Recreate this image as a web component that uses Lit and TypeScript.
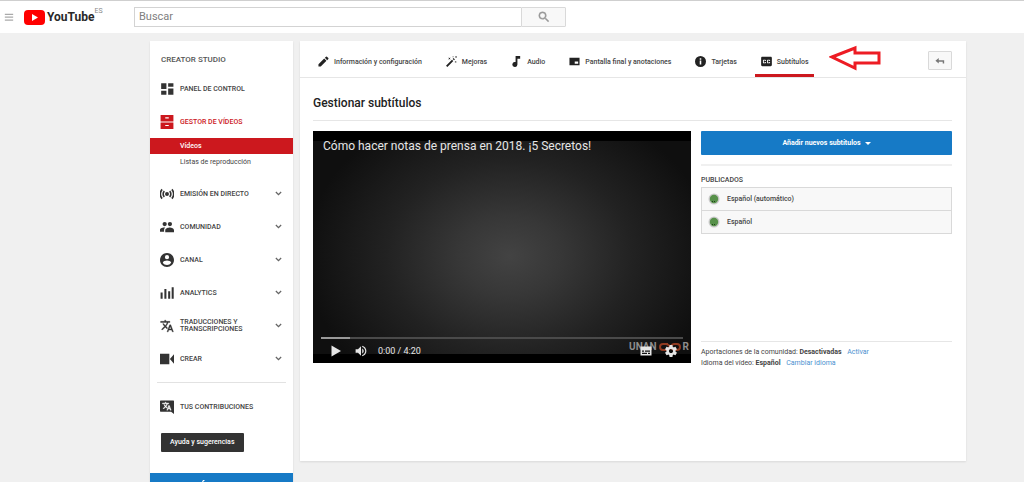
import { LitElement, html, css, svg, nothing } from "lit";
import { customElement, property } from "lit/decorators.js";

const icons: Record<string, unknown> = {
  menu: svg`<path d="M2 4h20v3H2zM2 11h20v3H2zM2 18h20v3H2z"/>`,
  search: svg`<path stroke="currentColor" stroke-width=".7" d="M15.5 14h-.79l-.28-.27A6.47 6.47 0 0 0 16 9.5 6.5 6.5 0 1 0 9.5 16c1.61 0 3.09-.59 4.23-1.57l.27.28v.79l5 4.99L20.49 19l-4.99-5zm-6 0C7.01 14 5 11.99 5 9.5S7.01 5 9.5 5 14 7.01 14 9.5 11.99 14 9.5 14z"/>`,
  dashboard: svg`<path d="M2 12h9V2H2v10zm0 10h9v-7H2v7zm12 0h9V11h-9v11zm0-20v6h9V2h-9z"/>`,
  drawers: svg`<path fill-rule="evenodd" d="M1 0h22v11H1zM9 4v2h6V4zM1 13h22v11H1zM9 17v2h6v-2z"/>`,
  live: svg`<circle cx="12" cy="12" r="3.4"/><path fill="none" stroke="currentColor" stroke-width="2.8" d="M7.5 7a7 7 0 0 0 0 10M16.5 7a7 7 0 0 1 0 10M3.600 4a12 12 0 0 0 0 16M20.400 4a12 12 0 0 1 0 16"/>`,
  people: svg`<circle cx="8" cy="7" r="3.700"/><circle cx="17" cy="7" r="3.700"/><path d="M17 13c-3 0-8 1.500-8 4.500V21h15v-3.500c0-3-4-4.500-7-4.500zM9 13c-4 0-9 1-9 4v3h7v-2.500c0-2 1-3.500 2-4.500z"/>`,
  account: svg`<path d="M12 0C5.400 0 0 5.400 0 12s5.400 12 12 12 12-5.400 12-12S18.600 0 12 0zm0 3.600a3.600 3.600 0 1 1 0 7.200 3.600 3.600 0 0 1 0-7.200zm0 17c-3 0-5.650-1.500-7.200-3.860.04-2.390 4.800-3.700 7.200-3.700s7.160 1.310 7.200 3.700A8.600 8.600 0 0 1 12 20.600z"/>`,
  bars: svg`<path d="M1 11h3.500v11H1zM7.500 5H11v17H7.500zM14 9h3.500v13H14zM20 2h3.500v20H20z"/>`,
  translate: svg`<path stroke="currentColor" stroke-width=".6" d="M12.870 15.070l-2.540-2.510.03-.03c1.740-1.940 2.980-4.170 3.710-6.530H17V4h-7V2H8v2H1v1.990h11.170C11.500 7.920 10.440 9.750 9 11.350 8.070 10.320 7.300 9.190 6.690 8h-2c.73 1.630 1.730 3.170 2.980 4.560l-5.090 5.020L4 19l5-5 3.110 3.110.76-2.040zM18.500 10h-2L12 22h2l1.120-3h4.750L21 22h2l-4.500-12zm-2.620 7l1.620-4.330L19.120 17h-3.240z"/>`,
  camera: svg`<path d="M0 3h16v18H0zM17 12l7-8v16z"/>`,
  contrib: svg`<path d="M1 1h22a1 1 0 0 1 1 1v22l-5-4H1a1 1 0 0 1-1-1V2a1 1 0 0 1 1-1z"/><g fill="#fff" stroke="#fff" transform="translate(3.500 2.500) scale(.68)"><path d="M12.870 15.070l-2.540-2.510.03-.03c1.740-1.940 2.980-4.170 3.710-6.530H17V4h-7V2H8v2H1v1.990h11.170C11.500 7.920 10.440 9.750 9 11.350 8.070 10.320 7.300 9.190 6.690 8h-2c.73 1.630 1.730 3.170 2.980 4.560l-5.090 5.020L4 19l5-5 3.110 3.110.76-2.040zM18.500 10h-2L12 22h2l1.120-3h4.750L21 22h2l-4.500-12zm-2.620 7l1.620-4.330L19.120 17h-3.240z"/></g>`,
  chevron: svg`<path fill="none" stroke="currentColor" stroke-width="4.500" d="M3 7l9 9 9-9"/>`,
  pencil: svg`<path d="M1 18v5h5L18.500 10.500l-5-5zM22.500 6.500a1.500 1.500 0 0 0 0-2l-3-3a1.500 1.500 0 0 0-2 0l-2.500 2.500 5 5z"/>`,
  wand: svg`<path d="M0 21L13 8l3 3L3 24zM14.500 6.500l2-2 3 3-2 2zM5 3l2.500 1.500L10 3 8.500 5.500 10 8 7.500 6.500 5 8l1.500-2.500zM14 0l1.500 1L17 0l-1 1.500L17 3l-1.500-1L14 3l1-1.500zM20 0l2 1 2-1-1 2 1 2-2-1-2 1 1-2zM19 11l2 1.200L23 11l-1.200 2L23 15l-2-1.200L19 15l1.200-2z"/>`,
  note: svg`<path d="M10 0h10v6h-6v12.500a5.500 5.500 0 1 1-4-5.300z"/>`,
  endscreen: svg`<path fill-rule="evenodd" d="M1 4h22v16H1zM12.500 12v5H20v-5z"/>`,
  info: svg`<path d="M12 0a12 12 0 1 0 0 24 12 12 0 0 0 0-24zm1.700 18.500h-3.400V10h3.400zm0-10.500h-3.400V4.800h3.400z"/>`,
  cc: svg`<path transform="translate(-3.600 -3.600) scale(1.300)" d="M19 4H5c-1.110 0-2 .9-2 2v12c0 1.100.89 2 2 2h14c1.100 0 2-.9 2-2V6c0-1.100-.9-2-2-2zm-8 7H9.500v-.5h-2v3h2V13H11v1c0 .55-.45 1-1 1H7c-.55 0-1-.45-1-1v-4c0-.55.45-1 1-1h3c.55 0 1 .45 1 1v1zm7 0h-1.500v-.5h-2v3h2V13H18v1c0 .55-.45 1-1 1h-3c-.55 0-1-.45-1-1v-4c0-.55.45-1 1-1h3c.55 0 1 .45 1 1v1z"/>`,
  back: svg`<path d="M9 5v5h13v8h-3.500v-4.500H9V18l-8-6.500z"/>`,
  play: svg`<path d="M3 1v22l19-11z"/>`,
  volume: svg`<path transform="translate(-2.400 -2.400) scale(1.200)" d="M3 9v6h4l5 5V4L7 9H3zm13.500 3c0-1.770-1.020-3.290-2.500-4.030v8.050c1.480-.73 2.500-2.250 2.500-4.020zM14 3.230v2.060c2.890.86 5 3.540 5 6.710s-2.110 5.850-5 6.710v2.060c4.010-.91 7-4.490 7-8.770s-2.990-7.860-7-8.770z"/>`,
  subs: svg`<path fill-rule="evenodd" d="M1 3h22v18H1zM4 11v2.500h4V11zm6 0v2.500h10V11zM4 15.500V18h10v-2.500zm12 0V18h4v-2.500z"/>`,
  gear: svg`<path transform="translate(-2.400 -2.400) scale(1.200)" d="M19.430 12.980c.04-.32.07-.64.07-.98s-.03-.66-.07-.98l2.110-1.650c.19-.15.24-.42.12-.64l-2-3.460c-.12-.22-.39-.3-.61-.22l-2.490 1c-.52-.4-1.080-.73-1.690-.98l-.38-2.650C14.460 2.180 14.250 2 14 2h-4c-.25 0-.46.18-.49.42l-.38 2.650c-.61.25-1.170.59-1.690.98l-2.490-1c-.23-.09-.49 0-.61.22l-2 3.460c-.13.22-.07.49.12.64l2.110 1.650c-.04.32-.07.65-.07.98s.03.66.07.98l-2.110 1.650c-.19.15-.24.42-.12.64l2 3.460c.12.22.39.3.61.22l2.490-1c.52.4 1.080.73 1.690.98l.38 2.650c.03.24.24.42.49.42h4c.25 0 .46-.18.49-.42l.38-2.650c.61-.25 1.170-.59 1.690-.98l2.490 1c.23.09.49 0 .61-.22l2-3.460c.12-.22.07-.49-.12-.64l-2.110-1.650zM12 15.500c-1.930 0-3.500-1.570-3.500-3.500s1.570-3.500 3.500-3.500 3.500 1.570 3.500 3.500-1.570 3.500-3.500 3.500z"/>`,
};

@customElement("ui-icon")
class UiIcon extends LitElement {
  @property() name = "";
  static styles = css`
    :host { display: block; flex: none; width: 14px; height: 14px; }
    svg { display: block; width: 100%; height: 100%; fill: currentColor; }
  `;
  render() {
    return html`<svg viewBox="0 0 24 24" aria-hidden="true">${icons[this.name]}</svg>`;
  }
}

const base = css`
  * { box-sizing: border-box; margin: 0; padding: 0; }
  a { color: inherit; text-decoration: none; }
  button { font: inherit; color: inherit; border: 0; background: none; }
  ul { list-style: none; }
`;

@customElement("studio-header")
class StudioHeader extends LitElement {
  static styles = [base, css`
    :host { display: block; }
    header { display: flex; align-items: center; height: 33px; padding-left: 4px; background: #fff; border-top: 1px solid #cfcfcf; }
    .menu { color: #aaa; }
    .menu ui-icon { width: 10px; height: 10px; }
    .logo { display: flex; align-items: center; margin-left: 10px; width: 110px; }
    .logo svg { width: 21px; height: 15px; margin-right: 2px; }
    .word { font-size: 12px; line-height: 18px; font-weight: 700; color: #282828; }
    .region { align-self: flex-start; font-size: 7px; line-height: 7px; color: #888; }
    form { display: flex; flex: 0 1 432px; height: 20px; }
    input { flex: 1; min-width: 0; font: 11px/18px Roboto, sans-serif; padding-left: 4px; border: 1px solid #d3d3d3; border-right: 0; border-radius: 0; background: #fff; }
    input::placeholder { color: #808080; opacity: 1; }
    .go { display: flex; align-items: center; justify-content: center; width: 45px; border: 1px solid #d9d9d9; border-radius: 0 1px 1px 0; background: #f8f8f8; color: #999; }
    .go ui-icon { width: 14px; height: 14px; }
  `];
  render() {
    return html`<header>
      <button class="menu" aria-label="Menú"><ui-icon name="menu"></ui-icon></button>
      <a class="logo" href="#" aria-label="YouTube ES">
        <svg viewBox="0 0 21 15"><rect width="21" height="15" rx="4" fill="#f00"/><path d="M8 4l6 3.500L8 11z" fill="#fff"/></svg>
        <span class="word">YouTube</span><span class="region">ES</span>
      </a>
      <form>
        <input type="text" placeholder="Buscar" aria-label="Buscar" />
        <button class="go" type="button" aria-label="Buscar"><ui-icon name="search"></ui-icon></button>
      </form>
    </header>`;
  }
}

const sections = [
  { icon: "live", label: "Emisión en directo" },
  { icon: "people", label: "Comunidad" },
  { icon: "account", label: "Canal" },
  { icon: "bars", label: "Analytics" },
  { icon: "translate", label: "Traducciones y transcripciones" },
  { icon: "camera", label: "Crear" },
];

@customElement("studio-sidebar")
class StudioSidebar extends LitElement {
  static styles = [base, css`
    :host { display: block; background: #fff; box-shadow: 0 1px 2px rgba(0, 0, 0, 0.1); color: #444; }
    h2 { font-size: 8px; line-height: 12px; font-weight: 500; padding: 13px 11px 6px; text-transform: uppercase; color: #555; }
    .row { display: flex; align-items: center; gap: 6px; height: 33px; padding: 0 11px 0 10px; font-weight: 500; text-transform: uppercase; line-height: 7px; }
    .row > ui-icon { color: #333; }
    .label { flex: 1; padding-top: 1px; }
    .row .more { width: 7px; height: 7px; color: #666; }
    .active, .active > ui-icon { color: #cc181e; }
    .sub { display: block; line-height: 16px; padding-left: 30px; }
    .chosen { background: #cc181e; color: #fff; font-weight: 500; }
    .subs { margin-bottom: 7px; }
    hr { border: 0; border-top: 1px solid #e2e2e2; margin: 7px 7px; }
    .help { display: block; margin: 10px 11px 21px; padding: 0 9px; line-height: 19px; border-radius: 1px; background: #333; color: #fff; font-weight: 500; }
    .classic { display: block; height: 24px; padding: 7px 0 0 51px; background: #167ac6; }
    .classic svg { display: block; width: 4px; height: 2px; fill: #fff; }
  `];
  render() {
    return html`<nav aria-label="Creator Studio">
      <h2>Creator Studio</h2>
      <a class="row" href="#"><ui-icon name="dashboard"></ui-icon><span class="label">Panel de control</span></a>
      <a class="row active" href="#"><ui-icon name="drawers"></ui-icon><span class="label">Gestor de vídeos</span></a>
      <div class="subs">
        <a class="sub chosen" href="#">Vídeos</a>
        <a class="sub" href="#">Listas de reproducción</a>
      </div>
      ${sections.map((s) => html`<a class="row" href="#"><ui-icon name=${s.icon}></ui-icon><span class="label">${s.label}</span><ui-icon class="more" name="chevron"></ui-icon></a>`)}
      <hr />
      <a class="row" href="#"><ui-icon name="contrib"></ui-icon><span class="label">Tus contribuciones</span></a>
      <button class="help">Ayuda y sugerencias</button>
      <a class="classic" href="#" aria-label="Creator Studio"><svg viewBox="0 0 4 2" aria-hidden="true"><path d="M2 0h2L2 2H1z"/></svg></a>
    </nav>`;
  }
}

@customElement("video-player")
class VideoPlayer extends LitElement {
  static styles = [base, css`
    :host { display: block; }
    .player { position: relative; display: flex; flex-direction: column; aspect-ratio: 378 / 232; color: #e6e6e6; border-top: 10px solid #000; border-bottom: 9px solid #000; background: radial-gradient(ellipse 54% 75% at 52% 54%, #434343 0%, #373737 25%, #222 60%, #0f0f0f 100%); }
    h3 { flex: 1; font-size: 12px; line-height: 14px; font-weight: 400; padding: 0 10px; margin-top: -2px; }
    .track { height: 2px; margin: 0 8px; background: #4a4a4a; }
    .loaded { width: 8%; height: 2px; background: #999; }
    .controls { display: flex; align-items: center; height: 24px; margin-bottom: -9px; padding: 0 14px 0 17px; z-index: 1; }
    .controls button + button { margin-left: 13px; }
    .controls ui-icon { width: 12px; height: 12px; }
    .time { flex: 1; margin-left: 11px; font-size: 9px; line-height: 12px; }
    .mark { position: absolute; right: 2px; bottom: 0; display: flex; align-items: center; font-size: 10px; line-height: 14px; font-weight: 700; color: #8d8d8d; }
    .mark svg { width: 26px; height: 10px; }
  `];
  render() {
    return html`<div class="player">
      <h3>Cómo hacer notas de prensa en 2018. ¡5 Secretos!</h3>
      <div class="track"><div class="loaded"></div></div>
      <div class="mark"><span>UNAN</span><svg viewBox="0 0 24 10" fill="none" stroke="#8f3a20" stroke-width="2"><path d="M10 2H5a3 3 0 0 0 0 6h3c3 0 5-6 8-6h3a3 3 0 0 1 0 6h-3c-3 0-4-6-8-6"/></svg><span>R</span></div>
      <div class="controls">
        <button aria-label="Reproducir"><ui-icon name="play"></ui-icon></button>
        <button aria-label="Volumen"><ui-icon name="volume"></ui-icon></button>
        <span class="time">0:00 / 4:20</span>
        <button aria-label="Subtítulos"><ui-icon name="subs"></ui-icon></button>
        <button aria-label="Configuración"><ui-icon name="gear"></ui-icon></button>
      </div>
    </div>`;
  }
}

const tabs = [
  { icon: "pencil", label: "Información y configuración" },
  { icon: "wand", label: "Mejoras" },
  { icon: "note", label: "Audio" },
  { icon: "endscreen", label: "Pantalla final y anotaciones" },
  { icon: "info", label: "Tarjetas" },
  { icon: "cc", label: "Subtítulos", active: true },
];

@customElement("subtitle-editor")
class SubtitleEditor extends LitElement {
  static styles = [base, css`
    :host { display: block; background: #fff; box-shadow: 0 1px 2px rgba(0, 0, 0, 0.1); color: #444; }
    .tabs { position: relative; display: flex; gap: 13px; height: 37px; padding: 0 14px 0 12px; border-bottom: 1px solid #e6e6e6; }
    .tab { display: flex; align-items: center; gap: 5px; height: 36px; padding: 7px 5px 0 6px; font-weight: 500; border-bottom: 3px solid transparent; white-space: nowrap; }
    .tab ui-icon { width: 11px; height: 11px; color: #222; }
    .tab span { padding-top: 2px; }
    .on { border-bottom-color: #cc181e; }
    .back { display: flex; align-items: center; justify-content: center; width: 24px; height: 19px; margin: 10px 0 0 auto; border: 1px solid #d9d9d9; border-radius: 1px; background: #f8f8f8; color: #777; }
    .back ui-icon { width: 10px; height: 10px; }
    .arrow { position: absolute; left: 529px; top: 4px; width: 54px; height: 26px; }
    .body { padding: 0 14px 98px 13px; }
    h1 { font-size: 12px; line-height: 16px; font-weight: 500; color: #222; padding: 17px 0 9px; border-bottom: 1px solid #e6e6e6; margin-bottom: 10px; }
    .columns { display: grid; grid-template-columns: 378fr 251fr; gap: 10px; }
    .side { display: flex; flex-direction: column; }
    .add { display: flex; align-items: center; justify-content: center; gap: 4px; height: 24px; border-radius: 1px; background: #167ac6; color: #fff; font-weight: 700; }
    .add svg { width: 6px; height: 3px; fill: #fff; }
    hr { border: 0; border-top: 2px solid #f0f0f0; margin-top: 9px; }
    h2 { font-size: 7px; line-height: 10px; font-weight: 500; text-transform: uppercase; margin: 9px 0 2px; }
    .list { border: 1px solid #d9d9d9; background: #f8f8f8; }
    .list li { font-weight: 500; }
    .list li + li { border-top: 1px solid #d9d9d9; }
    .list a { display: flex; align-items: center; gap: 7px; height: 22px; padding-left: 6px; }
    .list svg { width: 12px; height: 12px; }
    .facts { margin-top: auto; padding-top: 5px; border-top: 1px solid #e6e6e6; line-height: 11px; }
    .facts p:last-child { margin-bottom: -6px; }
    .facts b { font-weight: 700; }
    .facts a { color: #4a90cf; margin-left: 4px; }
  `];
  render() {
    return html`<nav class="tabs" aria-label="Editor">
        ${tabs.map((t) => html`<a class="tab ${t.active ? "on" : ""}" href="#" aria-current=${t.active ? "page" : nothing}><ui-icon name=${t.icon}></ui-icon><span>${t.label}</span></a>`)}
        <button class="back" aria-label="Volver"><ui-icon name="back"></ui-icon></button>
        <svg class="arrow" viewBox="0 0 54 26" aria-hidden="true"><path d="M3 12L26 3v5h24v10H26v5z" fill="#fff" stroke="#ed1c24" stroke-width="3"/></svg>
      </nav>
      <main class="body">
        <h1>Gestionar subtítulos</h1>
        <div class="columns">
          <video-player></video-player>
          <div class="side">
            <button class="add">Añadir nuevos subtítulos<svg viewBox="0 0 6 3"><path d="M0 0h6L3 3z"/></svg></button>
            <hr />
            <h2>Publicados</h2>
            <ul class="list">
              ${["Español (automático)", "Español"].map((l) => html`<li><a href="#"><svg viewBox="0 0 12 12"><circle cx="6" cy="6" r="5.500" fill="#c9c9c9"/><circle cx="6" cy="6" r="4.200" fill="#57914a"/><path d="M4 8.500h4" stroke="#1f3f19" stroke-dasharray="1 1"/></svg>${l}</a></li>`)}
            </ul>
            <div class="facts">
              <p>Aportaciones de la comunidad: <b>Desactivadas</b> <a href="#">Activar</a></p>
              <p>Idioma del vídeo: <b>Español</b> <a href="#">Cambiar idioma</a></p>
            </div>
          </div>
        </div>
      </main>`;
  }
}

@customElement("app-root")
class AppRoot extends LitElement {
  static styles = [base, css`
    :host { display: block; height: 100vh; overflow: hidden; background: #f0f0f0; font: 7px/10px Roboto, sans-serif; }
    .page { display: grid; grid-template-columns: 143px minmax(0, 1fr); align-items: start; gap: 7px; padding: 8px 58px 0 150px; }
  `];
  render() {
    return html`<studio-header></studio-header>
      <div class="page"><studio-sidebar></studio-sidebar><subtitle-editor></subtitle-editor></div>`;
  }
}
